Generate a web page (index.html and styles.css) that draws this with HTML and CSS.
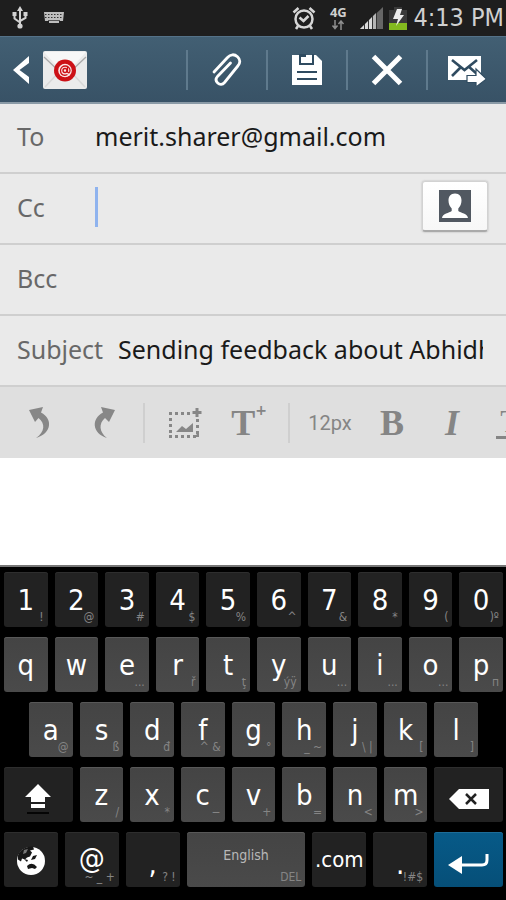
FILE: index.html
```html
<!DOCTYPE html>
<html lang="en">
<head>
<meta charset="utf-8">
<meta name="viewport" content="width=device-width, initial-scale=1">
<title>Compose email</title>
<link rel="stylesheet" href="styles.css">
</head>
<body>
<div class="screen">
  <header class="status">
    <svg class="status-usb" width="18" height="24" viewBox="0 0 18 24" fill="none" stroke="#d2d2d2" stroke-width="2">
      <path d="M9 4v16M3.500 8v4.500l5.500 4M14.500 8v4l-5.500 3"/>
      <path d="M9 0l3 5H6zM1.500 6h4v4h-4zM12.500 6h4v4h-4z" fill="#d2d2d2" stroke="none"/>
      <circle cx="9" cy="20" r="2.600" fill="#d2d2d2" stroke="none"/>
    </svg>
    <svg class="status-keys" width="22" height="14" viewBox="0 0 22 14">
      <path d="M1 1h20l-1 9h-4v2H6v-2H2z" fill="#bdbdbd"/>
      <path d="M2 3.500h18M2 6.500h18" stroke="#333" stroke-dasharray="1.500 1.500"/>
      <path d="M5 9.500h12" stroke="#555"/>
    </svg>
    <div class="status-right">
      <svg width="24" height="24" viewBox="0 0 24 24" fill="none" stroke="#d6d6d6" stroke-width="2.500">
        <circle cx="12" cy="13" r="8.500"/>
        <path d="M7.500 11.500l4 3.500 5-5M1.500 6.500l5-4.500M22.500 6.500l-5-4.500M6 20l-2 3M18 20l2 3" stroke-width="2.600"/>
      </svg>
      <div class="network">
        <span>4G</span>
        <svg width="14" height="10" viewBox="0 0 14 10" fill="none" stroke="#8e8e8e" stroke-width="1.500"><path d="M4 0v8M1.500 5.500l2.500 3 2.500-3M10 10V1.500M7.500 4l2.500-3 2.500 3"/></svg>
      </div>
      <svg class="signal" width="24" height="24" viewBox="0 0 24 24">
        <path d="M1 23L24 1v22z" fill="#666"/>
        <path d="M1 23l4-4v4zM6 18l3-3v8H6zM10 14l3-3v12h-3z" fill="#dadada"/>
        <path d="M14 10l3-3v16h-3z" fill="#b4b4b4"/>
        <path d="M5.500 18v5M9.500 14v9M13.500 10v13M17.500 7v16" stroke="#333"/>
      </svg>
      <svg class="battery" width="18" height="24" viewBox="0 0 18 24">
        <path d="M5 1h8v3h5v20H0V4h5z" fill="#3a3a3a"/>
        <path d="M0 17h18v7H0z" fill="#83ba1f"/>
        <path d="M8 3h5l-2 6h4L7 20l2-7H4z" fill="#eee"/>
      </svg>
      <time class="clock">4:13 PM</time>
    </div>
  </header>

  <nav class="appbar">
    <button class="back" aria-label="Back">
      <svg width="18" height="30" viewBox="0 0 18 30"><path d="M0 15L16 1v7L6.500 15l9.500 7v7z" fill="#fff"/></svg>
      <svg width="46" height="40" viewBox="0 0 46 40">
        <rect x="1" y="1" width="44" height="38" rx="2" fill="#ebebeb"/>
        <path d="M3 37l14-15M43 37L29 22" stroke="#d8d8d8" stroke-width="1.500"/>
        <path d="M2 2h42L25 23q-2 2-4 0z" fill="#f7f7f7"/>
        <path d="M2 7l18 17M44 7L26 24" stroke="#aaa" stroke-width="1.300"/>
        <circle cx="23" cy="20.500" r="11" fill="#cc1016"/>
        <circle cx="23" cy="20.500" r="6.800" fill="#fbe9e9"/>
        <circle cx="23" cy="20.500" r="2" fill="none" stroke="#cc1016" stroke-width="1.500"/>
        <path d="M25.500 17v5q2 2 2.500-1.500c0-6-9.500-6-9.500 0 0 5 4 5.500 7 4" fill="none" stroke="#cc1016" stroke-width="1.300"/>
      </svg>
    </button>
    <div class="actions">
      <button class="action" aria-label="Attach">
        <svg width="34" height="36" viewBox="0 0 34 36" fill="none" stroke="#fff" stroke-width="2.800" stroke-linecap="round"><path d="M4 20L17.500 5.500c3-3.500 7-3.500 10-.800s3 6.300.300 9.300L14.500 30.500c-2 2.300-4.800 2.300-6.800.500s-2-4.500 0-6.800L20.500 11"/></svg>
      </button>
      <button class="action" aria-label="Save">
        <svg width="32" height="32" viewBox="0 0 32 32"><path d="M1 1h24l6 6v24H1z" fill="#fff"/><path d="M9 0v10h13V0" fill="none" stroke="#2f4b60" stroke-width="2"/><path d="M6 18h20M6 25h20" fill="none" stroke="#2f4b60" stroke-width="2"/><path d="M10 0h5v3h-5z" fill="#2f4b60"/></svg>
      </button>
      <button class="action" aria-label="Discard">
        <svg width="32" height="32" viewBox="0 0 32 32"><path d="M2.500 2.500l27 27M29.500 2.500L2.500 29.500" stroke="#fff" stroke-width="5"/></svg>
      </button>
      <button class="action" aria-label="Send">
        <svg width="40" height="32" viewBox="0 0 40 32"><path d="M1 2h33v24H1z" fill="#fff"/><path d="M5 6l12.500 10L30 6M5 22l9-9M30 20l-9-8" fill="none" stroke="#2f4b60" stroke-width="2.600"/><path d="M20 21.500h9V15l10.500 10L29 33v-4.500h-9z" fill="#fff" stroke="#2f4b60" stroke-width="1.200"/></svg>
      </button>
    </div>
  </nav>

  <main class="compose">
    <form class="fields">
      <div class="field"><label for="to">To</label><input id="to" type="text" value="merit.sharer@gmail.com"></div>
      <div class="field">
        <label for="cc">Cc</label>
        <input id="cc" class="active" type="text">
        <button class="contact" type="button" aria-label="Choose contact">
          <svg width="34" height="33" viewBox="0 0 34 33"><path d="M1 0h32v32H1z" fill="#515861"/><path d="M17 3.500c-4.500 0-6.500 3-6.500 7 0 3 1.200 6 3.200 8v2.500c-2.500 2-9.200 2.500-9.700 7h26c-.500-4.500-7.200-5-9.700-7v-2.500c2-2 3.200-5 3.200-8 0-4-2-7-6.500-7z" fill="#fff"/></svg>
        </button>
      </div>
      <div class="field"><label for="bcc">Bcc</label><input id="bcc" type="text"></div>
      <div class="field subject"><label for="subject">Subject</label><input id="subject" type="text" value="Sending feedback about Abhidh"></div>
    </form>

    <div class="tools">
      <button class="tool" aria-label="Undo">
        <svg width="26" height="34" viewBox="0 0 26 34"><path d="M2 4l14-3-2 5.500c12 6 11 21-5 25.500 9-6 9.500-14.500 2.500-20L8 16z" fill="#878787"/></svg>
      </button>
      <button class="tool" aria-label="Redo">
        <svg width="26" height="34" viewBox="0 0 26 34"><path d="M24 4L10 1l2 5.500C0 12.500 1 27.500 16 32c-8-6-8.500-14.500-2-20l4 4z" fill="#878787"/></svg>
      </button>
      <span class="rule"></span>
      <button class="tool" aria-label="Insert image">
        <svg width="34" height="32" viewBox="0 0 34 32" fill="none" stroke="#878787"><path d="M1 6.500h23M1 29.500h30" stroke-width="3" stroke-dasharray="3 3"/><path d="M2.500 11v17M29.500 12v17" stroke-width="3" stroke-dasharray="3 3"/><path d="M29 1v9M24.500 5.500h9" stroke-width="3"/><path d="M8 25l6-6 4 3 7-6v9zM26 30l5-5v5z" fill="#878787" stroke="none"/></svg>
      </button>
      <button class="tool serif" aria-label="Text style">T<sup>+</sup></button>
      <span class="rule"></span>
      <button class="tool size">12px</button>
      <button class="tool serif narrow">B</button>
      <button class="tool serif narrow italic">I</button>
      <button class="tool serif under" aria-label="Underline"><span>T</span></button>
    </div>
    <textarea class="message" aria-label="Message"></textarea>
  </main>

  <section class="keyboard" aria-label="Keyboard">
    <div class="keys">
      <button class="key dark">1<small>!</small></button><button class="key dark">2<small>@</small></button><button class="key dark">3<small>#</small></button><button class="key dark">4<small>$</small></button><button class="key dark">5<small>%</small></button><button class="key dark">6<small>^</small></button><button class="key dark">7<small>&amp;</small></button><button class="key dark">8<small>*</small></button><button class="key dark">9<small>(</small></button><button class="key dark">0<small>)º</small></button>
    </div>
    <div class="keys">
      <button class="key">q</button><button class="key">w</button><button class="key">e<small>...</small></button><button class="key">r<small>ř</small></button><button class="key">t<small>ţ</small></button><button class="key">y<small>ýÿ</small></button><button class="key">u<small>...</small></button><button class="key">i<small>...</small></button><button class="key">o<small>...</small></button><button class="key">p<small>п</small></button>
    </div>
    <div class="keys inset">
      <button class="key">a<small>@</small></button><button class="key">s<small>ß</small></button><button class="key">d<small>đ</small></button><button class="key">f<small>^ &amp;</small></button><button class="key">g<small>°</small></button><button class="key">h<small>_ ~</small></button><button class="key">j<small>\ |</small></button><button class="key">k<small>[</small></button><button class="key">l<small>]</small></button>
    </div>
    <div class="keys">
      <button class="key dark wide" aria-label="Shift">
        <svg width="26" height="30" viewBox="0 0 26 30"><path d="M13 0l13 13h-6v5H6v-5H0z" fill="#fff"/><path d="M6 22h14" stroke="#fff" stroke-width="4"/><path d="M2 29h22" stroke="#050505" stroke-width="2"/></svg>
      </button>
      <button class="key">z<small>/</small></button><button class="key">x<small>*</small></button><button class="key">c<small>−</small></button><button class="key">v<small>+</small></button><button class="key">b<small>=</small></button><button class="key">n<small>&lt;</small></button><button class="key">m<small>&gt;</small></button>
      <button class="key dark wide" aria-label="Backspace">
        <svg width="40" height="20" viewBox="0 0 40 20"><path d="M0 10L10 0h30v20H10z" fill="#fff"/><path d="M17 5l10 10M27 5L17 15" stroke="#222" stroke-width="2.500"/></svg>
      </button>
    </div>
    <div class="keys">
      <button class="key dark mid" aria-label="Language">
        <svg width="30" height="30" viewBox="0 0 30 30"><circle cx="15" cy="16" r="14" fill="#fff"/><path d="M3 8Q8 1 17 1.500l1 3-4 1 2 2-2 4-3 1-2 2-3-1-1 3-3-2Q1 11 3 8zM17 11l4-1-2 4-4 1zM8 14l4 1-1 2zM11 21q5-5 10 1l-2 2-3-1-4 1z" fill="#171717"/><path d="M8 5l4-1-2 4-3 1z" fill="#777"/></svg>
      </button>
      <button class="key dark mid high">@<small>~ _ +</small></button>
      <button class="key dark mid low">,<small>? !</small></button>
      <button class="key space">English<small>DEL</small></button>
      <button class="key dark mid com">.com</button>
      <button class="key dark mid low">.<small>!#$</small></button>
      <button class="key enter wide" aria-label="Enter">
        <svg width="42" height="22" viewBox="0 0 42 22"><path d="M39 1v6q0 5-5 5H12" fill="none" stroke="#fff" stroke-width="3"/><path d="M0 12L14 3v18z" fill="#fff"/></svg>
      </button>
    </div>
  </section>
</div>
</body>
</html>
```
FILE: styles.css
```css
* { box-sizing: border-box; }

body {
  margin: 0;
  background: #fff;
  font-family: "Noto Sans", sans-serif;
}

button, input, textarea {
  margin: 0;
  padding: 0;
  border: 0;
  background: none;
  font: inherit;
  outline: 0;
}

svg { display: block; flex: none; }

.screen {
  display: flex;
  flex-direction: column;
  min-height: 100vh;
  overflow: hidden;
}

/* Status bar */
.status {
  display: flex;
  align-items: center;
  height: 36px;
  padding: 0 2px 0 11px;
  background: #1e1e1e;
  color: #d0d0d0;
}
.status-keys { margin-left: 14px; }
.status-right {
  display: flex;
  align-items: center;
  margin-left: auto;
}
.network {
  display: flex;
  flex-direction: column;
  align-items: center;
  width: 20px;
  margin-left: 12px;
  font: bold 13px/12px "Noto Sans", sans-serif;
}
.network svg { margin-top: 2px; }
.signal { margin-left: 11px; }
.battery { margin-left: 6px; }
.clock {
  margin-left: 6px;
  font: 25px/32px "DejaVu Sans Condensed", "DejaVu Sans", sans-serif;
  white-space: nowrap;
}

/* Action bar */
.appbar {
  display: flex;
  align-items: center;
  height: 68px;
  border-top: 1px solid #557288;
  border-bottom: 2px solid #8a9aa6;
  background: linear-gradient(#425f73, #385266);
}
.back {
  display: flex;
  align-items: center;
  gap: 11px;
  margin-left: 13px;
}
.actions { display: flex; margin-left: auto; }
.action {
  display: flex;
  align-items: center;
  justify-content: center;
  width: 80px;
  height: 40px;
  border-left: 2px solid #5f7a8d;
}

/* Recipient fields */
.compose {
  display: flex;
  flex: 1;
  flex-direction: column;
}
.fields { background: #eaeaea; }
.field {
  display: flex;
  align-items: center;
  height: 71px;
  padding: 0 18px 4px 17px;
  border-bottom: 2px solid #cfcfcf;
  font-size: 25px;
  line-height: 34px;
}
.field:first-child { height: 70px; }
.field label { flex: none; width: 78px; color: #686868; }
.field input { flex: 1; min-width: 0; height: 40px; color: #1a1a1a; }
.field .active { border-left: 3px solid #8fb3ee; }
.contact {
  display: flex;
  flex: none;
  align-items: center;
  justify-content: center;
  width: 66px;
  height: 51px;
  border: 1px solid #d2d2d2;
  border-bottom: 2px solid #aaa;
  border-radius: 3px;
  background: linear-gradient(#fff, #f7f7f7);
  box-shadow: 0 0 2px #aaa;
}
.field.subject { padding-right: 23px; }
.field.subject label { width: 101px; }

/* Formatting toolbar */
.tools {
  display: flex;
  align-items: center;
  height: 71px;
  padding-left: 8px;
  overflow: hidden;
  background: #dfdfdf;
  color: #858585;
}
.tool {
  display: flex;
  flex: none;
  align-items: center;
  justify-content: center;
  width: 64px;
  height: 48px;
  color: inherit;
}
.rule {
  flex: none;
  width: 2px;
  height: 40px;
  margin: 0 8px 0 7px;
  background: #cfcfcf;
}
.serif { font: bold 36px/40px "Liberation Serif", serif; }
.serif sup {
  align-self: flex-start;
  font: bold 14px/22px "DejaVu Sans", sans-serif;
}
.size { font: 20px/30px Roboto, sans-serif; }
.narrow { width: 60px; }
.italic { font-style: italic; }
.under { width: 56px; font-size: 32px; font-weight: normal; }
.under span { padding: 0 4px; border-bottom: 3px solid; line-height: 30px; }
.message { flex: 1; min-height: 40px; resize: none; }

/* Keyboard */
.keyboard {
  display: flex;
  flex-direction: column;
  gap: 10px;
  padding: 5px 3px 13px 4px;
  border-top: 2px solid #777;
  background: #000;
}
.keys { display: flex; gap: 7px; }
.inset { padding: 0 25px; }
.key {
  position: relative;
  display: flex;
  flex: 44 1 0;
  align-items: center;
  justify-content: center;
  min-width: 0;
  height: 55px;
  border-radius: 3px;
  background: linear-gradient(#444, #4a4a4a);
  box-shadow: inset 0 1px #585858;
  color: #fff;
  font: 29px/40px "DejaVu Sans Condensed", "DejaVu Sans", sans-serif;
}
.key small {
  position: absolute;
  right: 4px;
  bottom: 2px;
  color: #858585;
  font: 12px/16px "DejaVu Sans Condensed", "DejaVu Sans", sans-serif;
  white-space: nowrap;
}
.key.dark { background: #222; box-shadow: inset 0 1px #2e2e2e; }
.key.wide { flex-grow: 69; padding-top: 8px; }
.key.mid { flex-grow: 54; }
.key.low { padding-top: 8px; }
.key.high { padding-bottom: 4px; }
.key.com { font-size: 22px; }
.key.space {
  flex-grow: 119;
  padding-bottom: 10px;
  color: #b8b8b8;
  font-size: 14px;
}
.key.enter { background: linear-gradient(#075a88, #064f78); box-shadow: inset 0 1px #1d6c98; }
```
